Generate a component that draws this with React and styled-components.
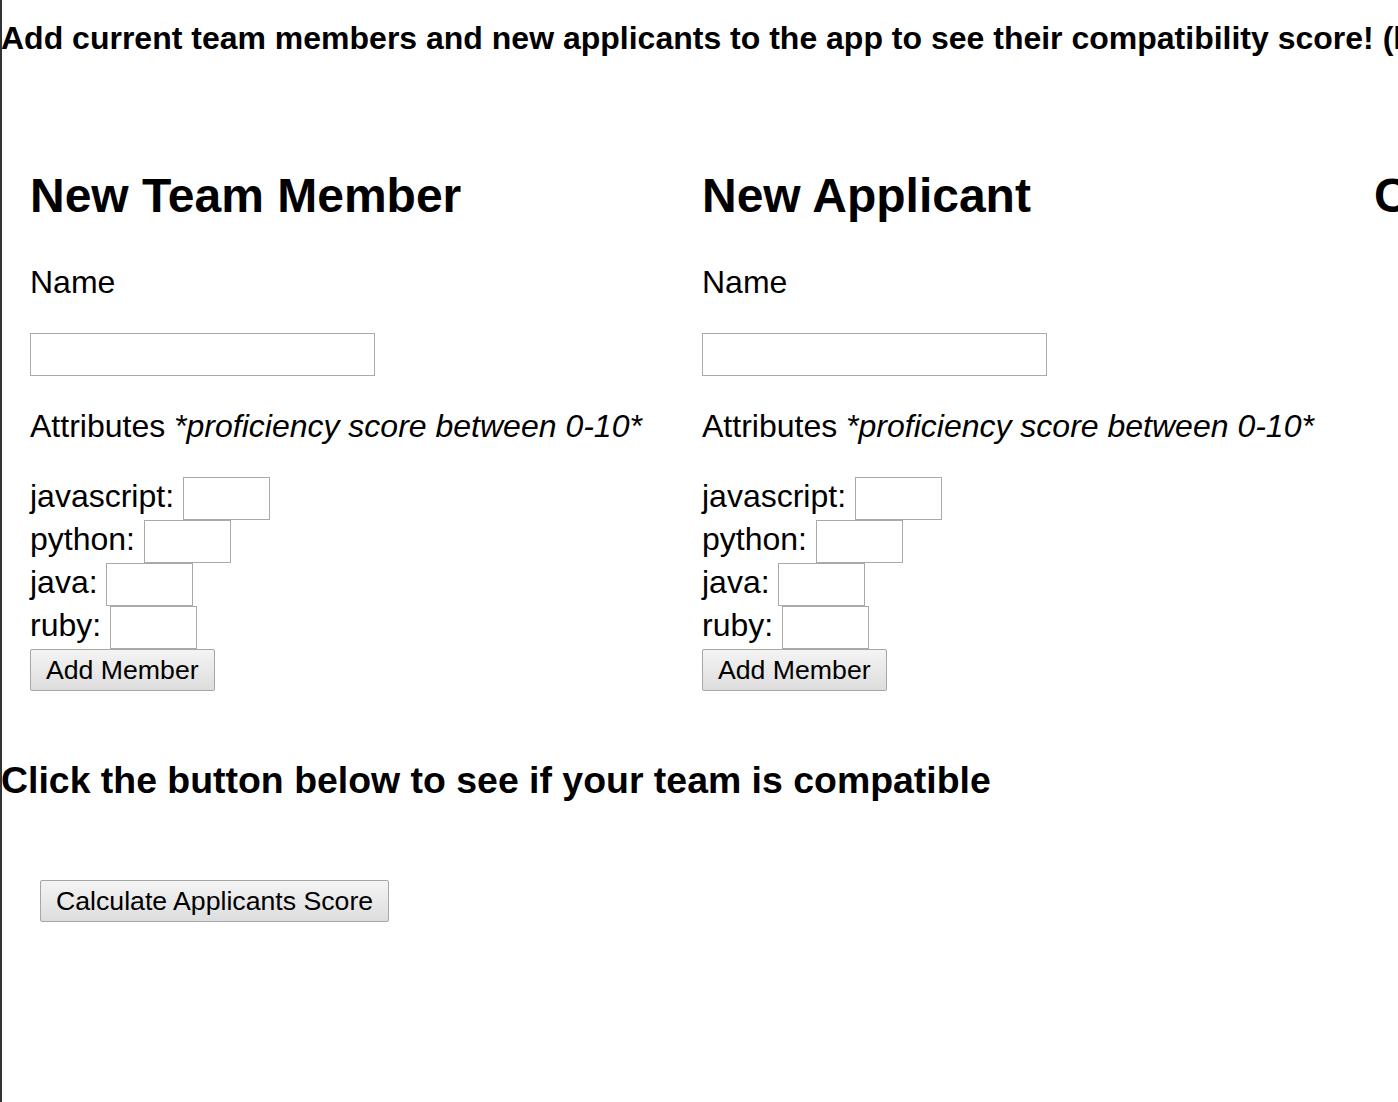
import React from 'react';
import styled, { createGlobalStyle } from 'styled-components';

// GLOBAL
const GlobalStyle = createGlobalStyle`
html, body {
    margin: 0;
    padding: 0;
    background: #fff;
    overflow: hidden;
}
`;

// STYLES
const Page = styled.div`
box-sizing: border-box;
width: 1398px;
min-height: 1102px;
border-left: 2px solid #333;
overflow: hidden;
font-family: "Liberation Sans", Arial, sans-serif;
font-size: 32px;
color: #000;
`;

const Intro = styled.p`
margin: 0 0 0 -1px;
padding-top: 20px;
font-weight: 700;
white-space: nowrap;
`;

const Columns = styled.div`
display: flex;
margin-top: 111px;
`;

const Column = styled.section`
box-sizing: border-box;
flex: 0 0 672px;
padding-left: 28px;
white-space: nowrap;
`;

const ColumnTitle = styled.h2`
margin: 0;
font-size: 48px;
font-weight: 700;
`;

const FieldLabel = styled.p`
margin: ${props => props.top} 0 0 0;
`;

const TextInput = styled.input`
box-sizing: border-box;
display: block;
width: ${props => props.w};
height: 43px;
margin-top: 32px;
padding: 0 3px 4px;
border: 1px solid #a9a9a9;
font-family: "Liberation Sans", Arial, sans-serif;
font-size: 32px;
background: #fff;
outline: none;
`;

const SkillList = styled.div`
margin-top: 32px;
`;

const SkillRow = styled.div`
& input{
    display: inline-block;
    margin: 0;
    vertical-align: baseline;
}
`;

const Button = styled.button`
box-sizing: border-box;
height: 42px;
padding: 0 15px;
border: 1px solid #a6a6a6;
border-radius: 2px;
background: linear-gradient(#f4f4f4, #dddddd);
font-family: "Liberation Sans", Arial, sans-serif;
font-size: 26.67px;
color: #000;
cursor: pointer;
`;

const Compat = styled.h3`
margin: 68px 0 0 -1px;
font-size: 37.44px;
font-weight: 700;
white-space: nowrap;
`;

const CalcWrap = styled.div`
margin-top: 78px;
padding-left: 38px;
`;

const skills = ['javascript', 'python', 'java', 'ruby'];

const MemberForm = ( { title } ) => (
    <Column>
        <ColumnTitle>{title}</ColumnTitle>
        <FieldLabel top="41px">Name</FieldLabel>
        <TextInput w="345px" type="text" />
        <FieldLabel top="32px">Attributes <em>*proficiency score between 0-10*</em></FieldLabel>
        <SkillList>
            {skills.map( skill => (
                <SkillRow key={skill}>
                    {skill}: <TextInput w="87px" type="text" />
                </SkillRow>
            ) )}
            <Button>Add Member</Button>
        </SkillList>
    </Column>
);

const App = () => {
    return (
        <Page>
            <GlobalStyle />
            <Intro>Add current team members and new applicants to the app to see their compatibility score! (lower is better)</Intro>
            <Columns>
                <MemberForm title="New Team Member" />
                <MemberForm title="New Applicant" />
                <Column>
                    <ColumnTitle>Current Team</ColumnTitle>
                </Column>
            </Columns>
            <Compat>Click the button below to see if your team is compatible</Compat>
            <CalcWrap>
                <Button>Calculate Applicants Score</Button>
            </CalcWrap>
        </Page>
    );
};

export default App;
